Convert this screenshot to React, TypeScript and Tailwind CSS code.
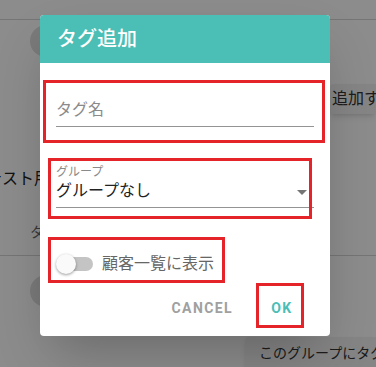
const font = { fontFamily: '"Roboto", "Noto Sans CJK JP", sans-serif' }

function Background() {
  return (
    <div className="flex flex-col w-full h-full">
      <div className="h-[20px] border-b border-[#d6d6d6] shrink-0" />
      <div className="h-[64px] flex items-start pl-[30px] pt-[5px] shrink-0">
        <div className="w-[32px] h-[32px] rounded-full bg-[#dedede]" />
      </div>
      <div className="h-[32px] flex justify-end shrink-0">
        <div className="w-[46px] h-[30px] bg-[#f2f2f2] shadow-md rounded-l-[4px] flex items-center pl-[2px] text-[16px] text-[#333] whitespace-nowrap overflow-hidden">
          追加する
        </div>
      </div>
      <div className="mt-[51px] h-[24px] leading-[24px] -ml-[14px] text-[16px] text-[#222] whitespace-nowrap shrink-0">
        テスト用
      </div>
      <div className="mt-[31px] pb-[13px] border-b border-[#d6d6d6] pl-[30px] text-[14px] leading-[20px] text-[#666] shrink-0">
        タグ
      </div>
      <div className="mt-[19px] pl-[30px] shrink-0">
        <div className="w-[32px] h-[32px] rounded-full bg-[#dedede]" />
      </div>
      <div className="flex justify-end mt-[30px] shrink-0">
        <div className="w-[131px] h-[32px] bg-[#f2f2f2] shadow-md rounded-tl-[4px] flex items-center pl-[14px] text-[14px] text-[#333] whitespace-nowrap overflow-hidden">
          このグループにタグを追加
        </div>
      </div>
    </div>
  )
}

function Dialog() {
  return (
    <div className="relative w-[290px] bg-white rounded-[4px] shadow-2xl">
      <div className="h-[48px] bg-[#4bbeb6] rounded-t-[4px] flex items-center px-[17px] text-[20px] font-medium text-white">
        タグ追加
      </div>
      <div className="px-[16px]">
        <div className="pt-[35px]">
          <div className="h-[29px] border-b border-[#949494] text-[16px] leading-[24px] text-[#8a8a8a]">
            タグ名
          </div>
        </div>
        <div className="pt-[38px]">
          <div className="text-[12px] leading-[14px] text-[#8a8a8a]">グループ</div>
          <div className="h-[29px] border-b border-[#949494] flex items-start justify-between">
            <span className="text-[16px] leading-[24px] text-[#222]">グループなし</span>
            <svg width="10" height="5" viewBox="0 0 10 5" className="mt-[11px] mr-[7px]">
              <path d="M0 0 L10 0 L5 5 Z" fill="#757575" />
            </svg>
          </div>
        </div>
        <div className="mt-[46px] h-[20px] flex items-center">
          <div className="relative w-[37px] h-[20px] flex items-center">
            <div className="w-[36px] h-[14px] ml-[1px] rounded-full bg-[#c4c4c4]" />
            <div className="absolute left-0 top-0 w-[20px] h-[20px] rounded-full bg-[#fafafa] shadow-[0_1px_3px_rgba(0,0,0,0.4)]" />
          </div>
          <span className="ml-[9px] text-[16px] text-[#666]">顧客一覧に表示</span>
        </div>
      </div>
      <div className="mt-[16px] pb-[10px] pr-[16px] flex justify-end gap-[9px]">
        <div className="h-[36px] px-[8px] flex items-center text-[14px] font-bold tracking-[0.1em] text-[#a0a0a0]">
          CANCEL
        </div>
        <div className="h-[36px] min-w-[64px] px-[8px] flex items-center justify-center text-[14px] font-bold tracking-[0.1em] text-[#4bbeb6]">
          OK
        </div>
      </div>

      <div className="absolute left-[3px] top-[65px] w-[282px] h-[63px] border-[3px] border-[#e5242a]" />
      <div className="absolute left-[8px] top-[143px] w-[264px] h-[61px] border-[3px] border-[#e5242a]" />
      <div className="absolute left-[8px] top-[222px] w-[177px] h-[46px] border-[3px] border-[#e5242a]" />
      <div className="absolute left-[216px] top-[268px] w-[48px] h-[45px] border-[3px] border-[#e5242a]" />
    </div>
  )
}

export default function App() {
  return (
    <div className="relative w-[376px] h-[367px] overflow-hidden bg-white" style={font}>
      <Background />
      <div className="absolute inset-0 bg-black/45 pl-[40px] pt-[15px]">
        <Dialog />
      </div>
    </div>
  )
}
